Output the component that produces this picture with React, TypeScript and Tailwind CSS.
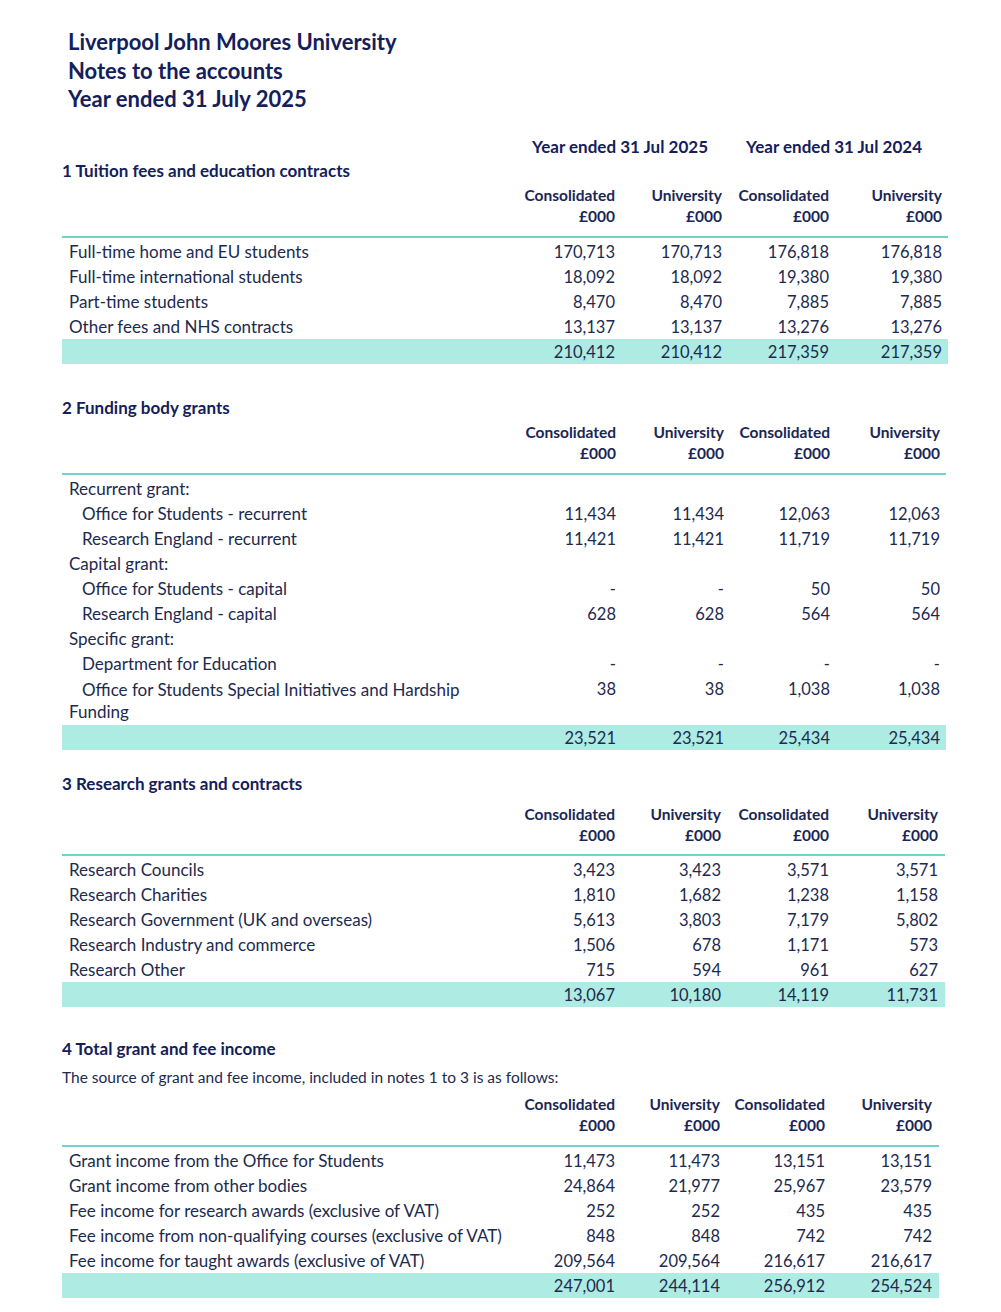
import React from 'react';

type Row = { label: string; indent?: boolean; wrapTail?: string; values?: string[] };

const Header = ({ cols, mt }: { cols: string; mt: string }) => (
  <div className={`grid ${cols} ${mt} text-[15.5px] leading-[21px] font-bold text-[#1a2656]`}>
    <div />
    {['Consolidated', 'University', 'Consolidated', 'University'].map((h, i) => (
      <div key={i} className="text-right">
        {h}
        <br />
        £000
      </div>
    ))}
  </div>
);

const Num = ({ v }: { v: string }) => (
  <div className="h-[25px] text-right text-[16.5px] leading-[26px]">{v}</div>
);

const Rows = ({ cols, rows, total }: { cols: string; rows: Row[]; total: string[] }) => (
  <>
    {rows.map((r) => (
      <div key={r.label} className={`grid ${cols} items-start`}>
        {r.wrapTail ? (
          <div className="indent-[13px] leading-[22px] pt-[3px] pb-[2px]">
            {r.label}
            <br />
            {r.wrapTail}
          </div>
        ) : (
          <div className={`leading-[25px] ${r.indent ? 'pl-[13px]' : ''}`}>{r.label}</div>
        )}
        {(r.values || ['', '', '', '']).map((v, i) => (
          <Num key={i} v={v} />
        ))}
      </div>
    ))}
    <div className={`grid ${cols} bg-[#aeebe3]`}>
      <div className="h-[25px]" />
      {total.map((v, i) => (
        <Num key={i} v={v} />
      ))}
    </div>
  </>
);

const Heading = ({ children }: { children: React.ReactNode }) => (
  <div className="leading-[24px] font-bold text-[#13205a]">{children}</div>
);

const Rule = ({ mt }: { mt: string }) => <div className={`${mt} mb-[1px] h-[2px] bg-[#6fd4c8]`} />;

const tuition: Row[] = [
  { label: 'Full-time home and EU students', values: ['170,713', '170,713', '176,818', '176,818'] },
  { label: 'Full-time international students', values: ['18,092', '18,092', '19,380', '19,380'] },
  { label: 'Part-time students', values: ['8,470', '8,470', '7,885', '7,885'] },
  { label: 'Other fees and NHS contracts', values: ['13,137', '13,137', '13,276', '13,276'] },
];

const funding: Row[] = [
  { label: 'Recurrent grant:' },
  { label: 'Office for Students - recurrent', indent: true, values: ['11,434', '11,434', '12,063', '12,063'] },
  { label: 'Research England - recurrent', indent: true, values: ['11,421', '11,421', '11,719', '11,719'] },
  { label: 'Capital grant:' },
  { label: 'Office for Students - capital', indent: true, values: ['-', '-', '50', '50'] },
  { label: 'Research England - capital', indent: true, values: ['628', '628', '564', '564'] },
  { label: 'Specific grant:' },
  { label: 'Department for Education', indent: true, values: ['-', '-', '-', '-'] },
  {
    label: 'Office for Students Special Initiatives and Hardship',
    wrapTail: 'Funding',
    values: ['38', '38', '1,038', '1,038'],
  },
];

const research: Row[] = [
  { label: 'Research Councils', values: ['3,423', '3,423', '3,571', '3,571'] },
  { label: 'Research Charities', values: ['1,810', '1,682', '1,238', '1,158'] },
  { label: 'Research Government (UK and overseas)', values: ['5,613', '3,803', '7,179', '5,802'] },
  { label: 'Research Industry and commerce', values: ['1,506', '678', '1,171', '573'] },
  { label: 'Research Other', values: ['715', '594', '961', '627'] },
];

const income: Row[] = [
  { label: 'Grant income from the Office for Students', values: ['11,473', '11,473', '13,151', '13,151'] },
  { label: 'Grant income from other bodies', values: ['24,864', '21,977', '25,967', '23,579'] },
  { label: 'Fee income for research awards (exclusive of VAT)', values: ['252', '252', '435', '435'] },
  { label: 'Fee income from non-qualifying courses (exclusive of VAT)', values: ['848', '848', '742', '742'] },
  { label: 'Fee income for taught awards (exclusive of VAT)', values: ['209,564', '209,564', '216,617', '216,617'] },
];

export default function App() {
  const c1 = 'grid-cols-[1fr_100px_107px_107px_113px] pl-[7px] pr-[6px]';
  const c2 = 'grid-cols-[1fr_100px_108px_106px_110px] pl-[7px] pr-[6px]';
  const c3 = 'grid-cols-[1fr_100px_106px_108px_109px] pl-[7px] pr-[7px]';
  const c4 = 'grid-cols-[1fr_100px_105px_105px_107px] pl-[7px] pr-[7px]';

  return (
    <div className="min-h-[1312px] w-[1001px] bg-white text-[17px] text-[#1c2a4f] font-['Lato','Liberation_Sans',sans-serif]">
      <div className="pt-[28px] pl-[68px] text-[22px] leading-[28.5px] font-bold text-[#13205a]">
        <div>Liverpool John Moores University</div>
        <div>Notes to the accounts</div>
        <div>Year ended 31 July 2025</div>
      </div>

      <div className="ml-[62px]">
        {/* 1 */}
        <div className="w-[886px]">
          <div className={`grid ${c1} mt-[21.5px] leading-[24px] font-bold text-[#13205a]`}>
            <div />
            <div className="col-span-2 text-right pr-[14px]">Year ended 31 Jul 2025</div>
            <div className="col-span-2 text-right pr-[20px]">Year ended 31 Jul 2024</div>
          </div>
          <Heading>1 Tuition fees and education contracts</Heading>
          <Header cols={c1} mt="mt-[1.5px]" />
          <Rule mt="mt-[9.5px]" />
          <Rows cols={c1} rows={tuition} total={['210,412', '210,412', '217,359', '217,359']} />
        </div>

        {/* 2 */}
        <div className="w-[884px] mt-[31.5px]">
          <Heading>2 Funding body grants</Heading>
          <Header cols={c2} mt="mt-[2.5px]" />
          <Rule mt="mt-[8.5px]" />
          <Rows cols={c2} rows={funding} total={['23,521', '23,521', '25,434', '25,434']} />
        </div>

        {/* 3 */}
        <div className="w-[883px] mt-[22.5px]">
          <Heading>3 Research grants and contracts</Heading>
          <Header cols={c3} mt="mt-[7.5px]" />
          <Rule mt="mt-[8.5px]" />
          <Rows cols={c3} rows={research} total={['13,067', '10,180', '14,119', '11,731']} />
        </div>

        {/* 4 */}
        <div className="w-[877px] mt-[29.5px]">
          <Heading>4 Total grant and fee income</Heading>
          <div className="mt-[4px] leading-[24px] text-[15.5px]">
            The source of grant and fee income, included in notes 1 to 3 is as follows:
          </div>
          <Header cols={c4} mt="mt-[5.5px]" />
          <Rule mt="mt-[8.5px]" />
          <Rows cols={c4} rows={income} total={['247,001', '244,114', '256,912', '254,524']} />
        </div>
      </div>
    </div>
  );
}
